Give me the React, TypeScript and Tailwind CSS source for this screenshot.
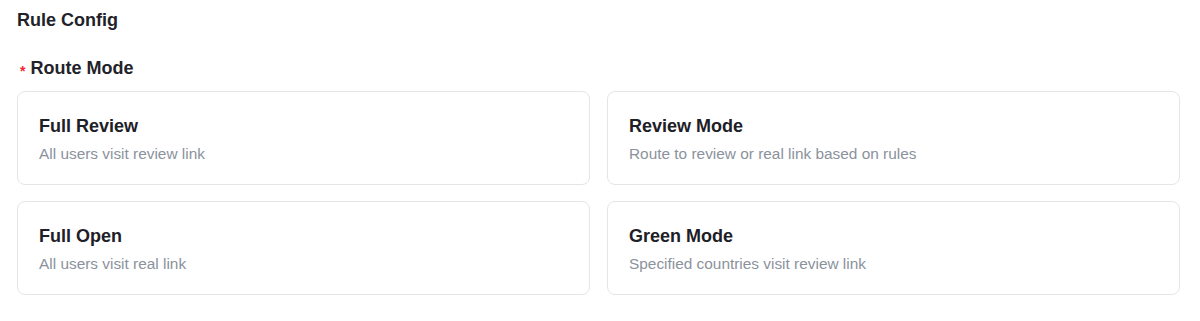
import React from 'react';

const modes = [
  { title: 'Full Review', desc: 'All users visit review link' },
  { title: 'Review Mode', desc: 'Route to review or real link based on rules' },
  { title: 'Full Open', desc: 'All users visit real link' },
  { title: 'Green Mode', desc: 'Specified countries visit review link' },
];

const App: React.FC = () => {
  return (
    <div className="min-h-[321px] bg-white pl-[17px] pr-5 pt-[9px] font-['Liberation_Sans',Arial,sans-serif]">
      <h2 className="text-[18px] font-bold leading-[22px] text-[#1f2329]">Rule Config</h2>
      <div className="mt-[26px] flex h-[22px] items-baseline text-[18px] font-bold leading-[22px] text-[#1f2329]">
        <span className="ml-[3px] mr-[5px] translate-y-[2px] text-[14px] leading-[22px] text-[#f5222d]">*</span>
        Route Mode
      </div>
      <div className="mt-[12px] grid grid-cols-2 gap-x-[17px] gap-y-[16px]">
        {modes.map((m) => (
          <div
            key={m.title}
            className="h-[94px] rounded-[8px] border border-[#e3e5e9] bg-white px-[21px] pt-[23px]"
          >
            <div className="text-[18px] font-bold leading-[22px] text-[#1d2026]">{m.title}</div>
            <div className="mt-[8px] text-[15.4px] leading-[18px] text-[#8b929c]">{m.desc}</div>
          </div>
        ))}
      </div>
    </div>
  );
};

export default App;
